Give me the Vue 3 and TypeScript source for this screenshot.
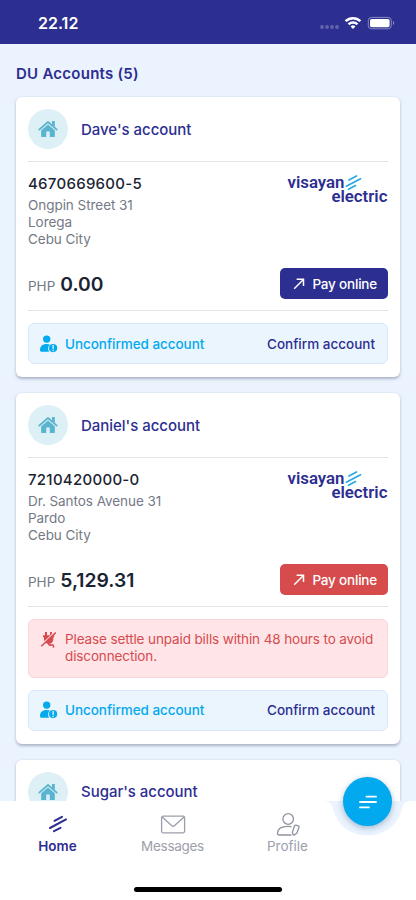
<script setup lang="ts">
interface Account {
  name: string
  number: string
  address: string[]
  amount: string
  overdue: boolean
}

const accounts: Account[] = [
  { name: "Dave's account", number: '4670669600-5', address: ['Ongpin Street 31', 'Lorega', 'Cebu City'], amount: '0.00', overdue: false },
  { name: "Daniel's account", number: '7210420000-0', address: ['Dr. Santos Avenue 31', 'Pardo', 'Cebu City'], amount: '5,129.31', overdue: true },
  { name: "Sugar's account", number: '', address: [], amount: '', overdue: false },
]
</script>

<template>
  <div class="screen">
    <header class="status">
      <span class="clock">22.12</span>
      <svg class="indicators" width="76" height="16" viewBox="0 0 76 16">
        <g fill="#6464ae">
          <circle cx="3" cy="12" r="1.9" /><circle cx="8" cy="12" r="1.9" /><circle cx="13" cy="12" r="1.9" /><circle cx="18" cy="12" r="1.9" />
        </g>
        <g fill="none" stroke="#fff" stroke-width="2.5">
          <path d="M26.6 6.2a10.5 10.5 0 0 1 14.8 0" />
          <path d="M29.6 9.4a6.2 6.2 0 0 1 8.8 0" />
        </g>
        <path d="M34 13.9l-2.4-2.4a3.4 3.4 0 0 1 4.8 0z" fill="#fff" />
        <rect x="49.3" y="2.4" width="23" height="11.4" rx="3.2" fill="none" stroke="#8a8ac6" />
        <rect x="51" y="4" width="19.6" height="8.2" rx="1.6" fill="#fff" />
        <path d="M74 6v4.2c1.6-.6 1.6-3.6 0-4.2z" fill="#8a8ac6" />
      </svg>
    </header>

    <main class="content">
      <h1 class="heading">DU Accounts (5)</h1>
      <article v-for="account in accounts" :key="account.name" class="card">
        <div class="card-head">
          <span class="avatar">
            <svg width="20" height="18" viewBox="0 0 20 18">
              <path d="M1.2 9.6L10 2l8.8 7.6" fill="none" stroke="#58b4cf" stroke-width="1.7" stroke-linecap="round" stroke-linejoin="round" />
              <path d="M14 1h2.8v6L14 4.6z" fill="#58b4cf" />
              <path d="M3.2 10.2L10 4.5l6.8 5.7v6.3q0 .5-.5.5h-4.5v-5.4H8.2V17H3.7q-.5 0-.5-.5z" fill="#58b4cf" />
            </svg>
          </span>
          <h2 class="name">{{ account.name }}</h2>
        </div>

        <template v-if="account.number">
          <div class="details">
            <div>
              <div class="number">{{ account.number }}</div>
              <div v-for="line in account.address" :key="line" class="address">{{ line }}</div>
            </div>
            <svg class="logo" width="102" height="40" viewBox="0 0 102 40">
              <g class="logo-text">
                <text x="1.5" y="16.2" textLength="57" lengthAdjust="spacingAndGlyphs">visayan</text>
                <text x="45.4" y="30" textLength="56" lengthAdjust="spacingAndGlyphs">electric</text>
              </g>
              <g stroke="#28aade" stroke-width="1.7" stroke-linecap="round">
                <path d="M63 8l7.5-4M60.3 14.2L74.5 6.7M62.5 17.2l7-3.6" />
              </g>
            </svg>
          </div>

          <div class="payment">
            <div class="total"><span class="currency">PHP</span><span class="amount">{{ account.amount }}</span></div>
            <button class="pay" :class="{ overdue: account.overdue }">
              <svg width="12" height="12" viewBox="0 0 12 12" fill="none" stroke="currentColor" stroke-width="1.5">
                <path d="M1.2 10.8L10.4 1.4M3.6 1.3h6.9v6.8" />
              </svg>
              <span>Pay online</span>
            </button>
          </div>

          <div class="notices">
            <div v-if="account.overdue" class="notice warning">
              <svg class="notice-icon" width="18" height="18" viewBox="0 0 18 18">
                <path d="M6 1v4M11 1v4" stroke="#d64b50" stroke-width="2" />
                <path d="M3 4.2h11.2v2h-.9c.2 4-1 6.3-4.3 6.6C5 12.7 3.7 10 4 6.2H3z" fill="#d64b50" />
                <path d="M8.5 11c-.4 3 1.2 3.4 2.8 2.9 1.8-.5 2.4.6 2.1 2.8" fill="none" stroke="#d64b50" stroke-width="1.6" />
                <path d="M1 14.2L14.8 1.3" stroke="#ffe5e7" stroke-width="1.3" />
                <path d="M1.3 15.3L15.8 1.6" stroke="#d64b50" stroke-width="1.5" />
              </svg>
              <p>Please settle unpaid bills within 48 hours to avoid disconnection.</p>
            </div>
            <div class="notice confirm">
              <svg class="notice-icon" width="18" height="18" viewBox="0 0 18 18" fill="#04a9ee">
                <circle cx="6.7" cy="4.1" r="3.7" />
                <path d="M0 15c0-4 2.8-6 6.6-6 1.4 0 2.4.2 3.3.6-2 1.7-2.4 4.6-.8 7.2H1.8C.6 16.8 0 16 0 15z" />
                <circle cx="13.1" cy="13.1" r="4.1" />
                <path d="M13.1 10.5v3" stroke="#ebf5fe" stroke-width="1.3" stroke-linecap="round" />
                <circle cx="13.1" cy="15.4" r=".75" fill="#ebf5fe" />
              </svg>
              <span class="state">Unconfirmed account</span>
              <a class="action">Confirm account</a>
            </div>
          </div>
        </template>
      </article>
    </main>

    <nav class="tabs">
      <svg class="surface" width="416" height="99" viewBox="0 0 416 99">
        <path d="M0 0H322C329 0 331.5 2 333.2 8C337 24.5 351 34.5 367.5 34.5S398 24.5 401.8 8C403.5 2 405 0 412 0H416V99H0z" fill="#fff" />
      </svg>
      <button class="fab">
        <svg width="20" height="14" viewBox="0 0 20 14" stroke="#fff" stroke-width="1.8" stroke-linecap="round">
          <path d="M8.5 1.7h9.5M2 7h16M2 12.4h9" />
        </svg>
      </button>
      <div class="tab-row">
        <a class="tab active">
          <svg width="26" height="28" viewBox="0 0 26 28" fill="none" stroke="#2c2e90" stroke-width="2" stroke-linecap="round">
            <path d="M9.5 10.8l7.5-4M5 18l16-8.6M9 21.2l6.5-3.4" />
          </svg>
          <span>Home</span>
        </a>
        <a class="tab messages">
          <svg width="26" height="28" viewBox="0 0 26 28" fill="none" stroke="#9a9eaa" stroke-width="1.3" stroke-linejoin="round">
            <rect x="1.6" y="6.2" width="23" height="16.6" rx="1.5" />
            <path d="M2.2 7l9.6 8.8q1.3 1.2 2.6 0L24 7" />
          </svg>
          <span>Messages</span>
        </a>
        <a class="tab">
          <svg width="26" height="28" viewBox="0 0 26 28" fill="none" stroke="#8f93a0" stroke-width="1.3" stroke-linecap="round" stroke-linejoin="round">
            <circle cx="13.2" cy="9" r="5.3" />
            <path d="M16 25H4.2Q2.4 25 2.5 23.2C2.7 18.8 6.5 16.4 13 16.4c1.2 0 2.1 0 3 .2" />
            <path d="M18.2 24.8l-.8-2.6 2.1-6.2q.4-1 1.4-.8l2.4.7q1 .4.7 1.4l-2.2 6-2.5 1.6q-.8.4-1.1-.1z" />
          </svg>
          <span>Profile</span>
        </a>
        <span></span>
      </div>
      <div class="home-bar"></div>
    </nav>
  </div>
</template>

<style>
body {
  margin: 0;
}
</style>

<style scoped>
.screen {
  position: relative;
  display: flex;
  flex-direction: column;
  width: 416px;
  height: 900px;
  overflow: hidden;
  background: #ebf4fe;
  color: #2c2e90;
  font-family: Inter, "Liberation Sans", sans-serif;
}

.status {
  display: flex;
  flex: none;
  align-items: center;
  justify-content: space-between;
  box-sizing: border-box;
  height: 44px;
  padding: 2px 21px 0 38px;
  background: #2c2e90;
}

.clock {
  color: #fff;
  font-size: 16px;
  font-weight: 600;
}

.content {
  display: flex;
  flex: 1;
  flex-direction: column;
  gap: 16px;
  min-height: 0;
  padding: 0 16px;
  overflow: hidden;
}

.heading {
  margin: 20px 0 -3px;
  font-size: 15px;
  font-weight: 600;
  line-height: 20px;
  letter-spacing: 0.25px;
}

.card {
  flex: none;
  box-sizing: border-box;
  padding: 12px 12px 13px;
  border-radius: 6px;
  background: #fff;
  box-shadow: 0 1.5px 3px rgba(40, 55, 90, 0.34);
}

.card-head {
  display: flex;
  align-items: center;
  gap: 13px;
  height: 40px;
  padding-bottom: 12px;
}

.avatar {
  display: flex;
  align-items: center;
  justify-content: center;
  width: 40px;
  height: 40px;
  border-radius: 50%;
  background: #dcf0f6;
}

.name {
  margin: 0;
  padding-top: 1px;
  font-size: 15px;
  font-weight: 500;
  line-height: 20px;
  letter-spacing: -0.03px;
}

.details {
  display: flex;
  justify-content: space-between;
  height: 106px;
  border-top: 1px solid #e3e4e8;
}

.number {
  padding: 12px 0 3px;
  color: #1b2433;
  font-size: 15px;
  font-weight: 500;
  line-height: 20px;
  letter-spacing: 0.28px;
}

.address {
  color: #747985;
  font-size: 13.5px;
  line-height: 17px;
  letter-spacing: -0.05px;
}

.logo {
  margin-top: 10px;
  overflow: visible;
}

.logo-text {
  fill: #2c2e90;
  font-family: Roboto, sans-serif;
  font-size: 17px;
  font-weight: 600;
}

.payment {
  display: flex;
  align-items: flex-start;
  justify-content: space-between;
  height: 42px;
  border-bottom: 1px solid #e3e4e8;
}

.total {
  display: flex;
  align-items: baseline;
  gap: 5px;
  padding-top: 1px;
  line-height: 30px;
}

.currency {
  color: #747985;
  font-size: 13.5px;
}

.amount {
  color: #1b2433;
  font-size: 19.3px;
  font-weight: 600;
}

.pay {
  display: flex;
  align-items: center;
  gap: 7px;
  height: 31px;
  padding: 0 11px 0 13px;
  border: 0;
  border-radius: 5px;
  background: #2c2e90;
  color: #fff;
  font: 500 13.5px/20px Inter, sans-serif;
  letter-spacing: -0.2px;
}

.pay.overdue {
  background: #d64b4c;
}

.notices {
  display: flex;
  flex-direction: column;
  gap: 12px;
  padding-top: 12px;
}

.notice {
  display: flex;
  box-sizing: border-box;
  border-radius: 6px;
  font-size: 13.5px;
}

.notice-icon {
  flex: none;
}

.warning {
  gap: 7px;
  height: 58.5px;
  padding: 11px 4px 0 11px;
  border: 1px solid #fbd5d9;
  background: #ffe5e7;
  color: #d64b50;
  line-height: 17px;
  letter-spacing: -0.12px;
}

.warning p {
  margin: 0;
}

.confirm {
  align-items: center;
  gap: 7px;
  height: 41px;
  padding: 0 12px 0 11px;
  border: 1px solid #d8e8f8;
  background: #ebf5fe;
  font-weight: 500;
}

.state {
  flex: 1;
  color: #04a9ee;
  letter-spacing: -0.05px;
}

.tabs {
  position: relative;
  flex: none;
  height: 99px;
}

.surface {
  position: absolute;
  inset: 0;
}

.fab {
  position: absolute;
  top: -24px;
  left: 343px;
  display: flex;
  align-items: center;
  justify-content: center;
  width: 49px;
  height: 49px;
  padding: 0;
  border: 0;
  border-radius: 50%;
  background: #02a9ee;
  box-shadow: 0 2px 6px rgba(30, 70, 120, 0.35);
}

.tab-row {
  position: relative;
  display: grid;
  grid-template-columns: repeat(3, 115px) 1fr;
  padding-top: 9px;
}

.tab {
  display: flex;
  flex-direction: column;
  align-items: center;
  color: #9da0ab;
  font-size: 13.5px;
  line-height: 17px;
}

.tab.active {
  color: #2c2e90;
  font-weight: 600;
}

.tab.messages {
  letter-spacing: -0.3px;
}

.home-bar {
  position: relative;
  width: 148px;
  height: 5px;
  margin: 32px auto 0;
  border-radius: 3px;
  background: #000;
}
</style>
